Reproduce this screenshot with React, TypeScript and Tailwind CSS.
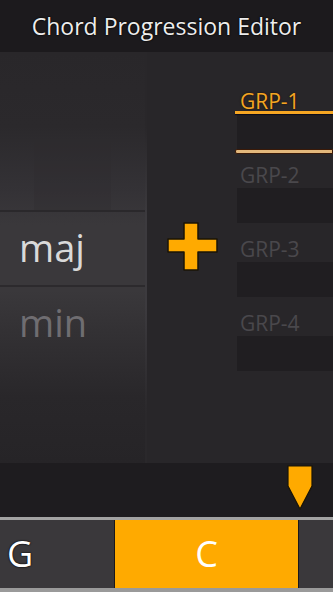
import React from "react";

const groups = ["GRP-1", "GRP-2", "GRP-3", "GRP-4"];

const PlusIcon = () => (
  <svg width="51" height="49" viewBox="0 0 51 49">
    <path
      d="M17 1 H31 V17 H50 V30 H31 V48 H17 V30 H1 V17 H17 Z"
      fill="#ffaa00"
      stroke="#1a1406"
      strokeWidth="1.5"
      strokeLinejoin="round"
    />
  </svg>
);

const Playhead = () => (
  <svg width="26" height="45" viewBox="0 0 26 45">
    <path d="M1 1 H25 V21 L13 44 L1 21 Z" fill="#ffaa00" stroke="#1a1406" strokeWidth="1.2" />
  </svg>
);

export default function App() {
  return (
    <div
      className="w-[333px] h-[592px] flex flex-col overflow-hidden bg-[#282629] select-none"
      style={{ fontFamily: '"Open Sans", "Noto Sans", sans-serif' }}
    >
      {/* header */}
      <div className="h-[52px] shrink-0 bg-[#1c1a1d] flex items-center justify-center text-[23px] font-medium text-[#ededed] [text-shadow:0_0_2px_#000,0_0_1px_#000]">
        Chord Progression Editor
      </div>

      {/* main */}
      <div className="h-[411px] shrink-0 flex">
        {/* chord quality picker */}
        <div className="w-[145px] shrink-0 flex flex-col bg-[linear-gradient(to_bottom,#29272a_0%,#2b292c_18%,#343236_34%,#3a383b_42%,#3a383b_58%,#333134_68%,#29272a_84%,#262427_100%)]">
          <div className="h-[86px] shrink-0" />
          <div className="h-[72px] shrink-0 mx-[34px] bg-[#2d2b2e]/30" />
          <div className="h-[2px] shrink-0 bg-[#2a282b]" />
          <div className="h-[73px] shrink-0 flex items-center pl-[19px] text-[38px] text-[#d9d9d9] leading-none pb-[4px]">
            maj
          </div>
          <div className="h-[2px] shrink-0 bg-[#2c2a2d]" />
          <div className="h-[73px] shrink-0 flex items-center pl-[19px] text-[38px] text-[#6f6d71] leading-none pb-[4px]">
            min
          </div>
        </div>
        <div className="w-[2px] shrink-0 bg-[linear-gradient(to_bottom,#29272a_0%,#29272a_18%,#3c3a3e_40%,#3c3a3e_62%,#2a282b_88%)]" />

        {/* add button */}
        <div className="w-[88px] shrink-0 flex justify-center pt-[170px] pl-[2px]">
          <PlusIcon />
        </div>

        {/* groups */}
        <div className="flex-1 flex flex-col pt-[36px]">
          {groups.map((g, i) => (
            <div key={g} className="h-[74px] shrink-0 flex flex-col">
              <div
                className={
                  "h-[26px] leading-[26px] pl-[5px] text-[21px] " +
                  (i === 0
                    ? "text-[#f5a623] [text-shadow:0_0_2px_#1a1000]"
                    : "text-[#4a484c]")
                }
              >
                {g}
              </div>
              <div className="relative h-[35px] ml-[2px] bg-[#201e21]">
                {i === 0 && (
                  <>
                    <div className="absolute -left-[2px] right-0 -top-[3px] h-[3px] bg-[#f5a623] shadow-[0_1px_1px_#0a0a1a]" />
                    <div className="absolute -left-[2px] right-0 -bottom-[5px] h-[5px] bg-[#e3b87c] border border-[#3a1a08] rounded-l-[2px]" />
                  </>
                )}
              </div>
            </div>
          ))}
        </div>
      </div>

      {/* timeline */}
      <div className="h-[54px] shrink-0 bg-[#1e1c1f] flex items-start pl-[287px] pt-[2px]">
        <Playhead />
      </div>

      {/* chord strip */}
      <div className="h-[3px] shrink-0 bg-[#a3a3a3]" />
      <div className="h-[68px] shrink-0 flex">
        <div className="w-[189px] -ml-[74px] shrink-0 bg-[#3a383b] border-r border-[#1a181b] flex items-center justify-center text-[36px] font-medium text-white [text-shadow:0_0_2px_#000,0_0_1px_#000]">
          G
        </div>
        <div className="w-[183px] shrink-0 bg-[#ffaa00] flex items-center justify-center text-[36px] text-white">
          C
        </div>
        <div className="w-[1px] shrink-0 bg-[#1a181b]" />
        <div className="flex-1 bg-[#3a383b]" />
      </div>
      <div className="flex-1 bg-[#9a9a9a]" />
    </div>
  );
}
